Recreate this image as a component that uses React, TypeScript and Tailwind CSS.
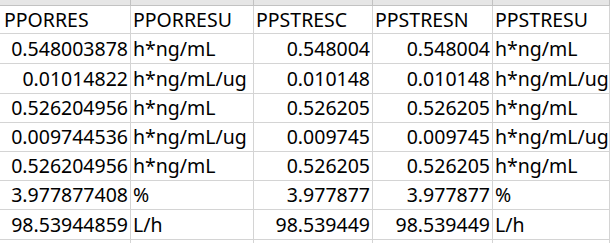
import React from 'react';

type Row = { h: string; cells: [string, string, string, string, string] };

const header: [string, string, string, string, string] = ['PPORRES', 'PPORRESU', 'PPSTRESC', 'PPSTRESN', 'PPSTRESU'];

const rows: Row[] = [
  { h: 'h-[30px]', cells: ['0.548003878', 'h*ng/mL', '0.548004', '0.548004', 'h*ng/mL'] },
  { h: 'h-[30px]', cells: ['0.01014822', 'h*ng/mL/ug', '0.010148', '0.010148', 'h*ng/mL/ug'] },
  { h: 'h-[29px]', cells: ['0.526204956', 'h*ng/mL', '0.526205', '0.526205', 'h*ng/mL'] },
  { h: 'h-[29px]', cells: ['0.009744536', 'h*ng/mL/ug', '0.009745', '0.009745', 'h*ng/mL/ug'] },
  { h: 'h-[29px]', cells: ['0.526204956', 'h*ng/mL', '0.526205', '0.526205', 'h*ng/mL'] },
  { h: 'h-[29px]', cells: ['3.977877408', '%', '3.977877', '3.977877', '%'] },
  { h: 'h-[30px]', cells: ['98.53944859', 'L/h', '98.539449', '98.539449', 'L/h'] },
];

// numeric columns are right aligned, unit columns left aligned
const align = ['justify-end pr-[2px]', 'justify-start pl-[2px]', 'justify-end pr-[2px]', 'justify-end pr-[2px]', 'justify-start pl-[2px]'];

const Cell: React.FC<{ text: string; col: number; h: string }> = ({ text, col, h }) => (
  <div className={`${h} flex items-center ${align[col]} border-r border-b border-[#d4d4d4] overflow-hidden whitespace-nowrap`}>
    {text}
  </div>
);

const HeaderCell: React.FC<{ text: string; col: number }> = ({ text, col }) => (
  <div
    className={`h-[28px] flex items-center ${col === 0 ? 'pl-[4px]' : 'pl-[2px]'} border-r border-b border-[#d4d4d4] overflow-hidden whitespace-nowrap`}
  >
    {text}
  </div>
);

export default function App() {
  return (
    <div
      className="w-[610px] h-[243px] overflow-hidden bg-white text-black text-[19.5px] leading-none"
      style={{ fontFamily: '"Noto Sans", "Open Sans", sans-serif' }}
    >
      <div className="grid grid-cols-[131px_123px_119px_120px_1fr]">
        {header.map((_, i) => (
          <div key={`band-${i}`} className="h-[6px] bg-[#e6e6e6] border-r border-b border-[#c2c2c2]" />
        ))}
        {header.map((t, i) => (
          <HeaderCell key={`hd-${i}`} text={t} col={i} />
        ))}
        {rows.map((r, ri) =>
          r.cells.map((t, ci) => <Cell key={`${ri}-${ci}`} text={t} col={ci} h={r.h} />)
        )}
        {header.map((_, i) => (
          <div key={`tail-${i}`} className="h-[10px] border-r border-[#d4d4d4]" />
        ))}
      </div>
    </div>
  );
}
